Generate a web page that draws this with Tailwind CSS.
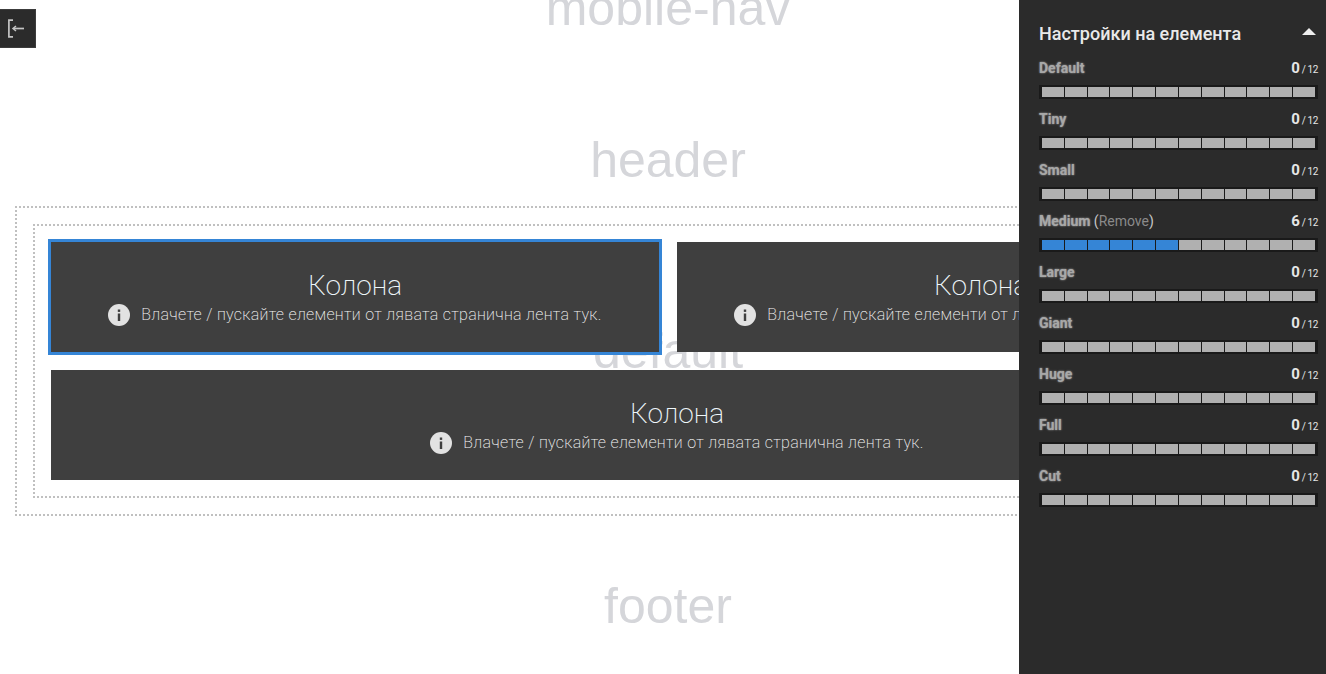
<!DOCTYPE html>
<html lang="en">
<head>
  <meta charset="UTF-8">
  <title>Настройки на елемента</title>
  <script src="https://cdn.jsdelivr.net/npm/@tailwindcss/browser@4"></script>
</head>
<body class="bg-white overflow-hidden font-['Roboto',sans-serif]">
  <div class="relative w-[1326px] h-[674px] overflow-hidden">

    <!-- page skeleton -->
    <div class="w-[1336px] text-center text-[50px] leading-[56px] text-[#d5d6da] font-['Liberation_Sans',sans-serif]">
      <div class="h-[206px] flex flex-col">
        <div class="-mt-[20px]">mobile-nav</div>
        <div class="mt-[96px]">header</div>
      </div>

      <div class="relative w-[1296px] ml-[15px] h-[310px] p-[18px] bg-[linear-gradient(90deg,#c0c0c0_50%,transparent_50%),linear-gradient(90deg,#c0c0c0_50%,transparent_50%),linear-gradient(#c0c0c0_50%,transparent_50%),linear-gradient(#c0c0c0_50%,transparent_50%)] bg-[length:4px_2px,4px_2px,2px_4px,2px_4px] bg-[position:0_0,0_100%,0_0,100%_0] [background-repeat:repeat-x,repeat-x,repeat-y,repeat-y]">
        <div class="absolute -left-[15px] w-[1336px] top-[117px] z-0">default</div>
        <div class="relative z-10 h-[274px] p-[18px] w-[1260px] bg-[linear-gradient(90deg,#c0c0c0_50%,transparent_50%),linear-gradient(90deg,#c0c0c0_50%,transparent_50%),linear-gradient(#c0c0c0_50%,transparent_50%),linear-gradient(#c0c0c0_50%,transparent_50%)] bg-[length:4px_2px,4px_2px,2px_4px,2px_4px] bg-[position:0_0,0_100%,0_0,100%_0] [background-repeat:repeat-x,repeat-x,repeat-y,repeat-y]">
          <div class="flex gap-[18px] w-[1234px]">
            <div class="w-[608px] h-[110px] shrink-0 bg-[#3f3f3f] flex flex-col items-center pt-[28px] font-['Roboto',sans-serif] font-extralight outline-[3px] outline-[#3585d6]">
              <div class="text-[28px] leading-[32px] text-[#eef6fa]">Колона</div>
              <div class="flex items-center gap-[11px] text-[16px] leading-[24px] tracking-[0.3px] text-[#f6f6f6] mt-[1px]">
                <svg class="w-[22px] h-[22px]" viewBox="0 0 22 22"><circle cx="11" cy="11" r="11" fill="#e2e2e2"/><rect x="9.8" y="9.5" width="2.4" height="7.5" fill="#3f3f3f"/><rect x="9.8" y="5.5" width="2.4" height="2.4" fill="#3f3f3f"/></svg>
                <span>Влачете / пускайте елементи от лявата странична лента тук.</span>
              </div>
            </div>
            <div class="w-[608px] h-[110px] shrink-0 bg-[#3f3f3f] flex flex-col items-center pt-[28px] font-['Roboto',sans-serif] font-extralight">
              <div class="text-[28px] leading-[32px] text-[#eef6fa]">Колона</div>
              <div class="flex items-center gap-[11px] text-[16px] leading-[24px] tracking-[0.3px] text-[#f6f6f6] mt-[1px]">
                <svg class="w-[22px] h-[22px]" viewBox="0 0 22 22"><circle cx="11" cy="11" r="11" fill="#e2e2e2"/><rect x="9.8" y="9.5" width="2.4" height="7.5" fill="#3f3f3f"/><rect x="9.8" y="5.5" width="2.4" height="2.4" fill="#3f3f3f"/></svg>
                <span>Влачете / пускайте елементи от лявата странична лента тук.</span>
              </div>
            </div>
          </div>
          <div class="w-[1252px] h-[110px] mt-[18px] bg-[#3f3f3f] flex flex-col items-center pt-[28px] font-['Roboto',sans-serif] font-extralight">
            <div class="text-[28px] leading-[32px] text-[#eef6fa]">Колона</div>
            <div class="flex items-center gap-[11px] text-[16px] leading-[24px] tracking-[0.3px] text-[#f6f6f6] mt-[1px]">
              <svg class="w-[22px] h-[22px]" viewBox="0 0 22 22"><circle cx="11" cy="11" r="11" fill="#e2e2e2"/><rect x="9.8" y="9.5" width="2.4" height="7.5" fill="#3f3f3f"/><rect x="9.8" y="5.5" width="2.4" height="2.4" fill="#3f3f3f"/></svg>
              <span>Влачете / пускайте елементи от лявата странична лента тук.</span>
            </div>
          </div>
        </div>
      </div>

      <div class="mt-[62px]">footer</div>
    </div>

    <!-- sidebar toggle -->
    <div class="absolute left-0 top-[9px] w-[36px] h-[39px] bg-[#2b2b2b] border-r border-y border-[#3c3c3c] flex items-center pl-[7px] z-20">
      <svg class="w-[18px] h-[19px]" viewBox="0 0 18 19" fill="none" stroke="#c4c4c4" stroke-width="1.7">
        <path d="M6 1.2H1.9V17.8H6"/>
        <path d="M17 9.5H7"/>
        <path d="M9 7L6 9.5L9 12" stroke-width="1.5"/>
      </svg>
    </div>

    <!-- settings panel -->
    <aside class="absolute top-0 right-0 w-[307px] h-[674px] bg-[#2b2b2b] pl-[20px] pr-[8px] z-30">
      <div class="flex items-center justify-between h-[24px] mt-[22px] mb-[13px] pr-[2px]">
        <h2 class="text-[18px] leading-[24px] font-medium text-[#e9e9e9]">Настройки на елемента</h2>
        <span class="w-0 h-0 border-x-[7px] border-x-transparent border-b-[7px] border-b-[#eeeeee] mb-[6px]"></span>
      </div>
      <div id="rows" class="flex flex-col gap-[11px]"></div>
    </aside>
  </div>

  <script>
    const sizes = [
      ['Default', 0], ['Tiny', 0], ['Small', 0], ['Medium', 6], ['Large', 0],
      ['Giant', 0], ['Huge', 0], ['Full', 0], ['Cut', 0]
    ];

    document.getElementById('rows').innerHTML = sizes.map(([name, value]) => {
      let cells = '';
      for (let i = 0; i < 12; i++) {
        cells += `<i class="flex-1 ${i < value ? 'bg-[#3585d6]' : 'bg-[#b0b0b0]'}"></i>`;
      }
      const remove = value > 0
        ? ' <span class="font-normal text-[#c8c8c8] [text-shadow:none]">(<span class="text-[#8a8a8a]">Remove</span>)</span>'
        : '';
      return `<div>
        <div class="flex items-baseline justify-between h-[19px] mb-[7px] text-[#a8a8a8] text-[14px] leading-[18px] font-bold">
          <span><span class="[text-shadow:0_0_2px_#aaa]">${name}</span>${remove}</span>
          <span class="text-[15px] text-[#e6e6e6]">${value}<span class="text-[10px] font-normal ml-[2px] tracking-[-0.4px]">/ 12</span></span>
        </div>
        <div class="flex gap-px h-[14px] bg-[#1a1a1a] px-[3px] py-[2px]">${cells}</div>
      </div>`;
    }).join('');
  </script>
</body>
</html>
